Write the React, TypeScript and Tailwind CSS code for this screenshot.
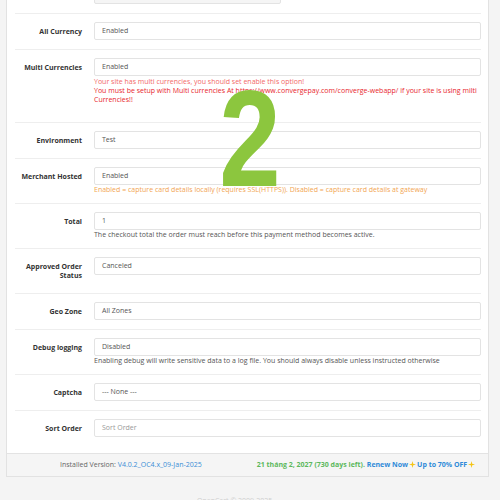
import React from "react";

const Sparkle = () => (
  <svg width="7" height="7" viewBox="0 0 10 10" className="inline-block mx-[1px] -mt-[1px] align-middle">
    <path d="M5 0 L6 4 L10 5 L6 6 L5 10 L4 6 L0 5 L4 4 Z" fill="#f5c518" />
  </svg>
);

const Field = ({ value, placeholder }: { value?: string; placeholder?: string }) => (
  <div className="h-[18px] border border-[#e3e3e3] rounded-[2px] px-[7px] flex items-center bg-white">
    {value ? (
      <span className="text-[#555]">{value}</span>
    ) : (
      <span className="text-[#999]">{placeholder}</span>
    )}
  </div>
);

type RowProps = {
  label: string;
  tall?: boolean;
  last?: boolean;
  children: React.ReactNode;
};

const Row = ({ label, tall, last, children }: RowProps) => (
  <div className={`flex items-start gap-[12px] pt-[8px] pb-[9px] ${last ? "" : "border-b border-[#eeeeee]"}`}>
    <div className={`w-[67px] shrink-0 text-right font-bold text-[#333] leading-[9px] pt-[5px] ${tall ? "pb-[4px]" : ""}`}>
      {label}
    </div>
    <div className="flex-1 min-w-0">{children}</div>
  </div>
);

export default function App() {
  return (
    <div className="relative w-[500px] h-[500px] overflow-hidden bg-[#f4f4f4] text-[7px] font-['Open_Sans',sans-serif]">
      <div className="ml-[6px] -mt-[23px] w-[483px] bg-white border border-[#e2e2e2]">
        <div className="pl-[8px] pr-[7px] pb-[7px]">
          {/* cut-off row at the top */}
          <div className="flex items-start gap-[12px] pt-[8px] pb-[9px] border-b border-[#eeeeee]">
            <div className="w-[67px] shrink-0" />
            <div className="h-[18px] w-[187px] border border-[#e3e3e3] rounded-[2px] bg-[#f5f5f5]" />
          </div>

          <Row label="All Currency">
            <Field value="Enabled" />
          </Row>

          <Row label="Multi Currencies">
            <Field value="Enabled" />
            <div className="mt-[1px] -mb-[1px] leading-[9px] whitespace-nowrap">
              <div className="text-[#f26868]">Your site has multi currencies, you should set enable this option!</div>
              <div className="text-[#e8262d]">
                You must be setup with Multi currencies At https://www.convergepay.com/converge-webapp/ if your site is using milti
              </div>
              <div className="text-[#e8262d]">Currencies!!</div>
              <div className="h-[10px]" />
            </div>
          </Row>

          <Row label="Environment">
            <Field value="Test" />
          </Row>

          <Row label="Merchant Hosted">
            <Field value="Enabled" />
            <div className="leading-[9px] whitespace-nowrap text-[#f2a552]">
              Enabled = capture card details locally (requires SSL(HTTPS)). Disabled = capture card details at gateway
            </div>
          </Row>

          <Row label="Total">
            <Field value="1" />
            <div className="leading-[9px] whitespace-nowrap text-[#555]">
              The checkout total the order must reach before this payment method becomes active.
            </div>
          </Row>

          <Row label="Approved Order Status" tall>
            <Field value="Canceled" />
          </Row>

          <Row label="Geo Zone">
            <Field value="All Zones" />
          </Row>

          <Row label="Debug logging">
            <Field value="Disabled" />
            <div className="leading-[9px] whitespace-nowrap text-[#555]">
              Enabling debug will write sensitive data to a log file. You should always disable unless instructed otherwise
            </div>
          </Row>

          <Row label="Captcha">
            <Field value="--- None ---" />
          </Row>

          <Row label="Sort Order" last>
            <Field placeholder="Sort Order" />
          </Row>
        </div>

        <div className="h-[23px] border-t border-[#e3e3e3] bg-[#f5f5f5] flex items-center pl-[53px] whitespace-nowrap">
          <span className="text-[#666]">
            Installed Version: <span className="text-[#3a8ed6]">V4.0.2_OC4.x_09-Jan-2025</span>
          </span>
          <span className="ml-[55px] font-bold">
            <span className="text-[#5cb85c]">21 tháng 2, 2027 (730 days left).</span>{" "}
            <span className="text-[#2f8ad8]">Renew Now</span>
            <Sparkle />
            <span className="text-[#2f8ad8]">Up to 70% OFF</span>
            <Sparkle />
          </span>
        </div>
      </div>

      <div className="pt-[19px] pl-[197px] text-[#cfcfcf] whitespace-nowrap">OpenCart © 2009-2025</div>

      <div className="absolute left-[200px] top-[69px] w-[100px] text-center font-['Liberation_Sans',sans-serif] font-bold text-[138px] leading-none text-[#8cc63e] scale-x-[0.8]">
        2
      </div>
    </div>
  );
}
